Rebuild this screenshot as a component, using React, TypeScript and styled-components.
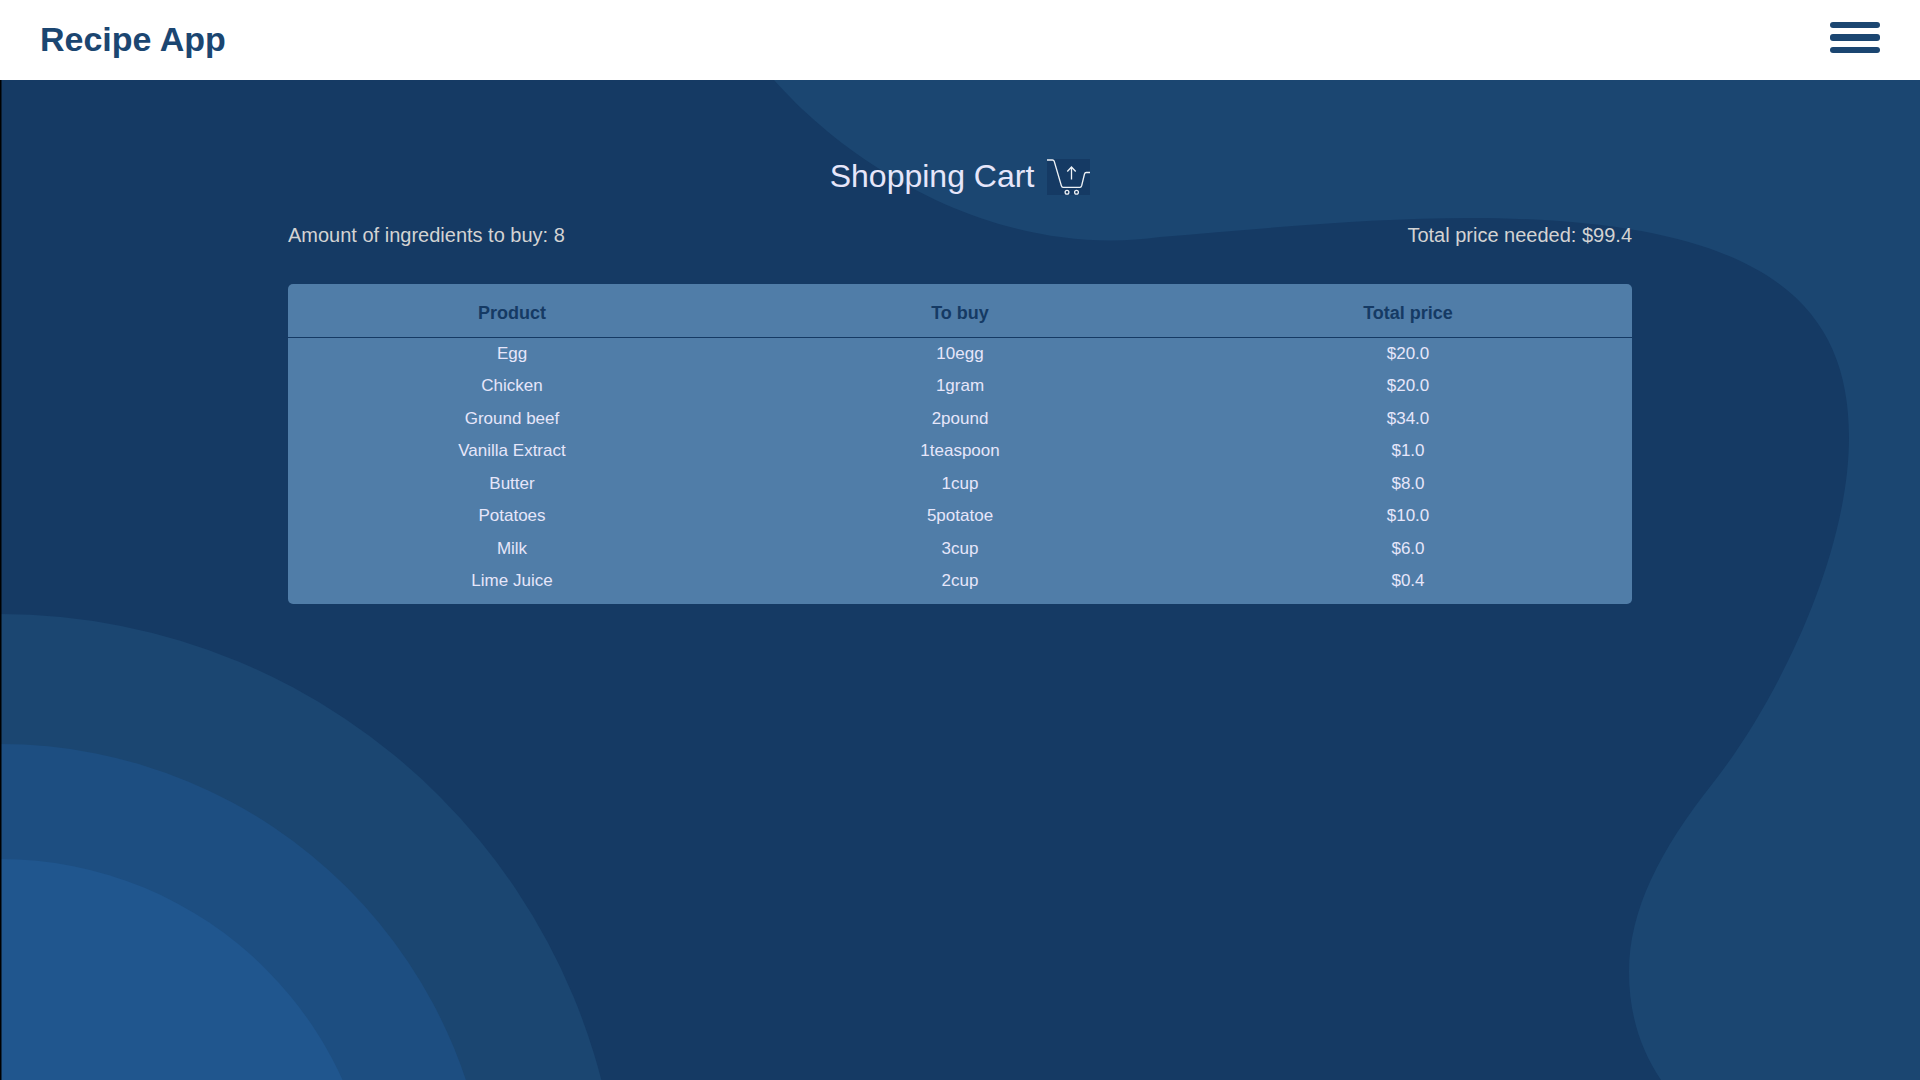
import React from "react";
import styled, { createGlobalStyle } from "styled-components";

const colors = {
  navy: "#153a64",
  steel: "#1b4671",
  azure: "#1d4e81",
  bright: "#20568e",
  panel: "#507da8",
  lavender: "#e6e6fa",
  silver: "#d3d3d3",
};

const GlobalStyle = createGlobalStyle`
  *, *::before, *::after {
    box-sizing: border-box;
  }
  body {
    margin: 0;
    background: ${colors.navy};
    font-family: "Liberation Sans", Arial, sans-serif;
  }
`;

const Page = styled.div`
  display: flex;
  flex-direction: column;
  min-height: 100vh;
`;

const Header = styled.header`
  display: flex;
  align-items: center;
  justify-content: space-between;
  height: 80px;
  padding: 0 40px 2px;
  background: #fff;
`;

const Brand = styled.a`
  color: ${colors.steel};
  font-size: 34px;
  font-weight: bold;
  line-height: 40px;
  text-decoration: none;
`;

const MenuButton = styled.button`
  display: flex;
  flex-direction: column;
  gap: 6px;
  width: 50px;
  margin: 0 0 3px;
  padding: 0;
  border: 0;
  background: none;
  cursor: pointer;
`;

const MenuBar = styled.span`
  height: 6px;
  border-radius: 3px;
  background: ${colors.steel};

  &:nth-child(2) {
    height: 7px;
  }
`;

const Main = styled.main`
  position: relative;
  flex: 1;
  overflow: hidden;
`;

const Backdrop = styled.svg`
  position: absolute;
  inset: 0;
  width: 100%;
  height: 100%;
`;

const Content = styled.section`
  position: relative;
  width: 70%;
  margin: 0 auto;
  padding: 76px 0 40px;
`;

const TitleRow = styled.div`
  display: flex;
  align-items: flex-end;
  justify-content: center;
  gap: 13px;
`;

const Title = styled.h1`
  margin: 0;
  color: ${colors.lavender};
  font-size: 32px;
  font-weight: normal;
  line-height: 40px;
`;

const CartIcon = styled.svg`
  width: 43px;
  height: 36px;
  margin-bottom: 1px;
  background: ${colors.navy};
`;

const Summary = styled.div`
  display: flex;
  justify-content: space-between;
  margin: 27px 0 37px;
  color: ${colors.silver};
  font-size: 20px;
  line-height: 24px;
`;

const Table = styled.table`
  width: 100%;
  table-layout: fixed;
  border-spacing: 0;
  padding-bottom: 6px;
  border-radius: 5px;
  background: ${colors.panel};
  text-align: center;
`;

const HeadCell = styled.th`
  height: 54px;
  padding: 4px 0 0;
  border-bottom: 1px solid ${colors.navy};
  color: ${colors.navy};
  font-size: 18px;
  line-height: 20px;
`;

const Row = styled.tr`
  height: 32px;

  &:nth-child(even) {
    height: 33px;
  }
`;

const Cell = styled.td`
  padding: 6px 0 0;
  color: ${colors.lavender};
  font-size: 17px;
  line-height: 20px;
  vertical-align: top;
`;

const columns = ["Product", "To buy", "Total price"];

const items = [
  { product: "Egg", amount: "10egg", price: "$20.0" },
  { product: "Chicken", amount: "1gram", price: "$20.0" },
  { product: "Ground beef", amount: "2pound", price: "$34.0" },
  { product: "Vanilla Extract", amount: "1teaspoon", price: "$1.0" },
  { product: "Butter", amount: "1cup", price: "$8.0" },
  { product: "Potatoes", amount: "5potatoe", price: "$10.0" },
  { product: "Milk", amount: "3cup", price: "$6.0" },
  { product: "Lime Juice", amount: "2cup", price: "$0.4" },
];

function Waves() {
  return (
    <Backdrop viewBox="0 0 1920 1000" preserveAspectRatio="xMidYMid slice" aria-hidden="true">
      <path
        fill={colors.steel}
        d="M774 0C845 80 970 160.500 1111 160.500C1128 160.500 1143 159 1160 157C1270 148 1370 138 1470 138C1765 138 1849 224 1849 357C1849 475 1778 620 1713 703C1660 770 1629 830 1629 892C1629 935 1641 970 1661 1000H1920V0Z"
      />
      <circle cx="0" cy="1155" r="621" fill={colors.steel} />
      <circle cx="0" cy="1155" r="491" fill={colors.azure} />
      <circle cx="0" cy="1155" r="376" fill={colors.bright} />
      <rect width="1" height="1000" fill="#000" />
      <rect x="1" width="1" height="1000" fill="#000" opacity="0.5" />
    </Backdrop>
  );
}

function Cart() {
  return (
    <CartIcon viewBox="0 0 43 36" fill="none" stroke="#eef2f6" strokeWidth="1.300" aria-hidden="true">
      <path d="M0 1H5.500Q6.800 1 7.200 2.300L14.300 26.500Q14.800 28.300 16 28.300H33Q34.200 28.300 34.700 26.500L37.500 15Q37.900 13.500 39.200 13.500H43" />
      <path d="M24.500 20.500V8M20.300 12.500L24.500 8L28.700 12.500" />
      <circle cx="20" cy="33.300" r="1.900" />
      <circle cx="29.500" cy="33.300" r="1.900" />
    </CartIcon>
  );
}

export default function App() {
  return (
    <>
      <GlobalStyle />
      <Page>
        <Header>
          <Brand href="#">Recipe App</Brand>
          <MenuButton type="button" aria-label="Open menu">
            <MenuBar />
            <MenuBar />
            <MenuBar />
          </MenuButton>
        </Header>
        <Main>
          <Waves />
          <Content>
            <TitleRow>
              <Title>Shopping Cart</Title>
              <Cart />
            </TitleRow>
            <Summary>
              <span>Amount of ingredients to buy: 8</span>
              <span>Total price needed: $99.4</span>
            </Summary>
            <Table>
              <thead>
                <tr>
                  {columns.map((name) => (
                    <HeadCell key={name} scope="col">
                      {name}
                    </HeadCell>
                  ))}
                </tr>
              </thead>
              <tbody>
                {items.map((item) => (
                  <Row key={item.product}>
                    <Cell>{item.product}</Cell>
                    <Cell>{item.amount}</Cell>
                    <Cell>{item.price}</Cell>
                  </Row>
                ))}
              </tbody>
            </Table>
          </Content>
        </Main>
      </Page>
    </>
  );
}
